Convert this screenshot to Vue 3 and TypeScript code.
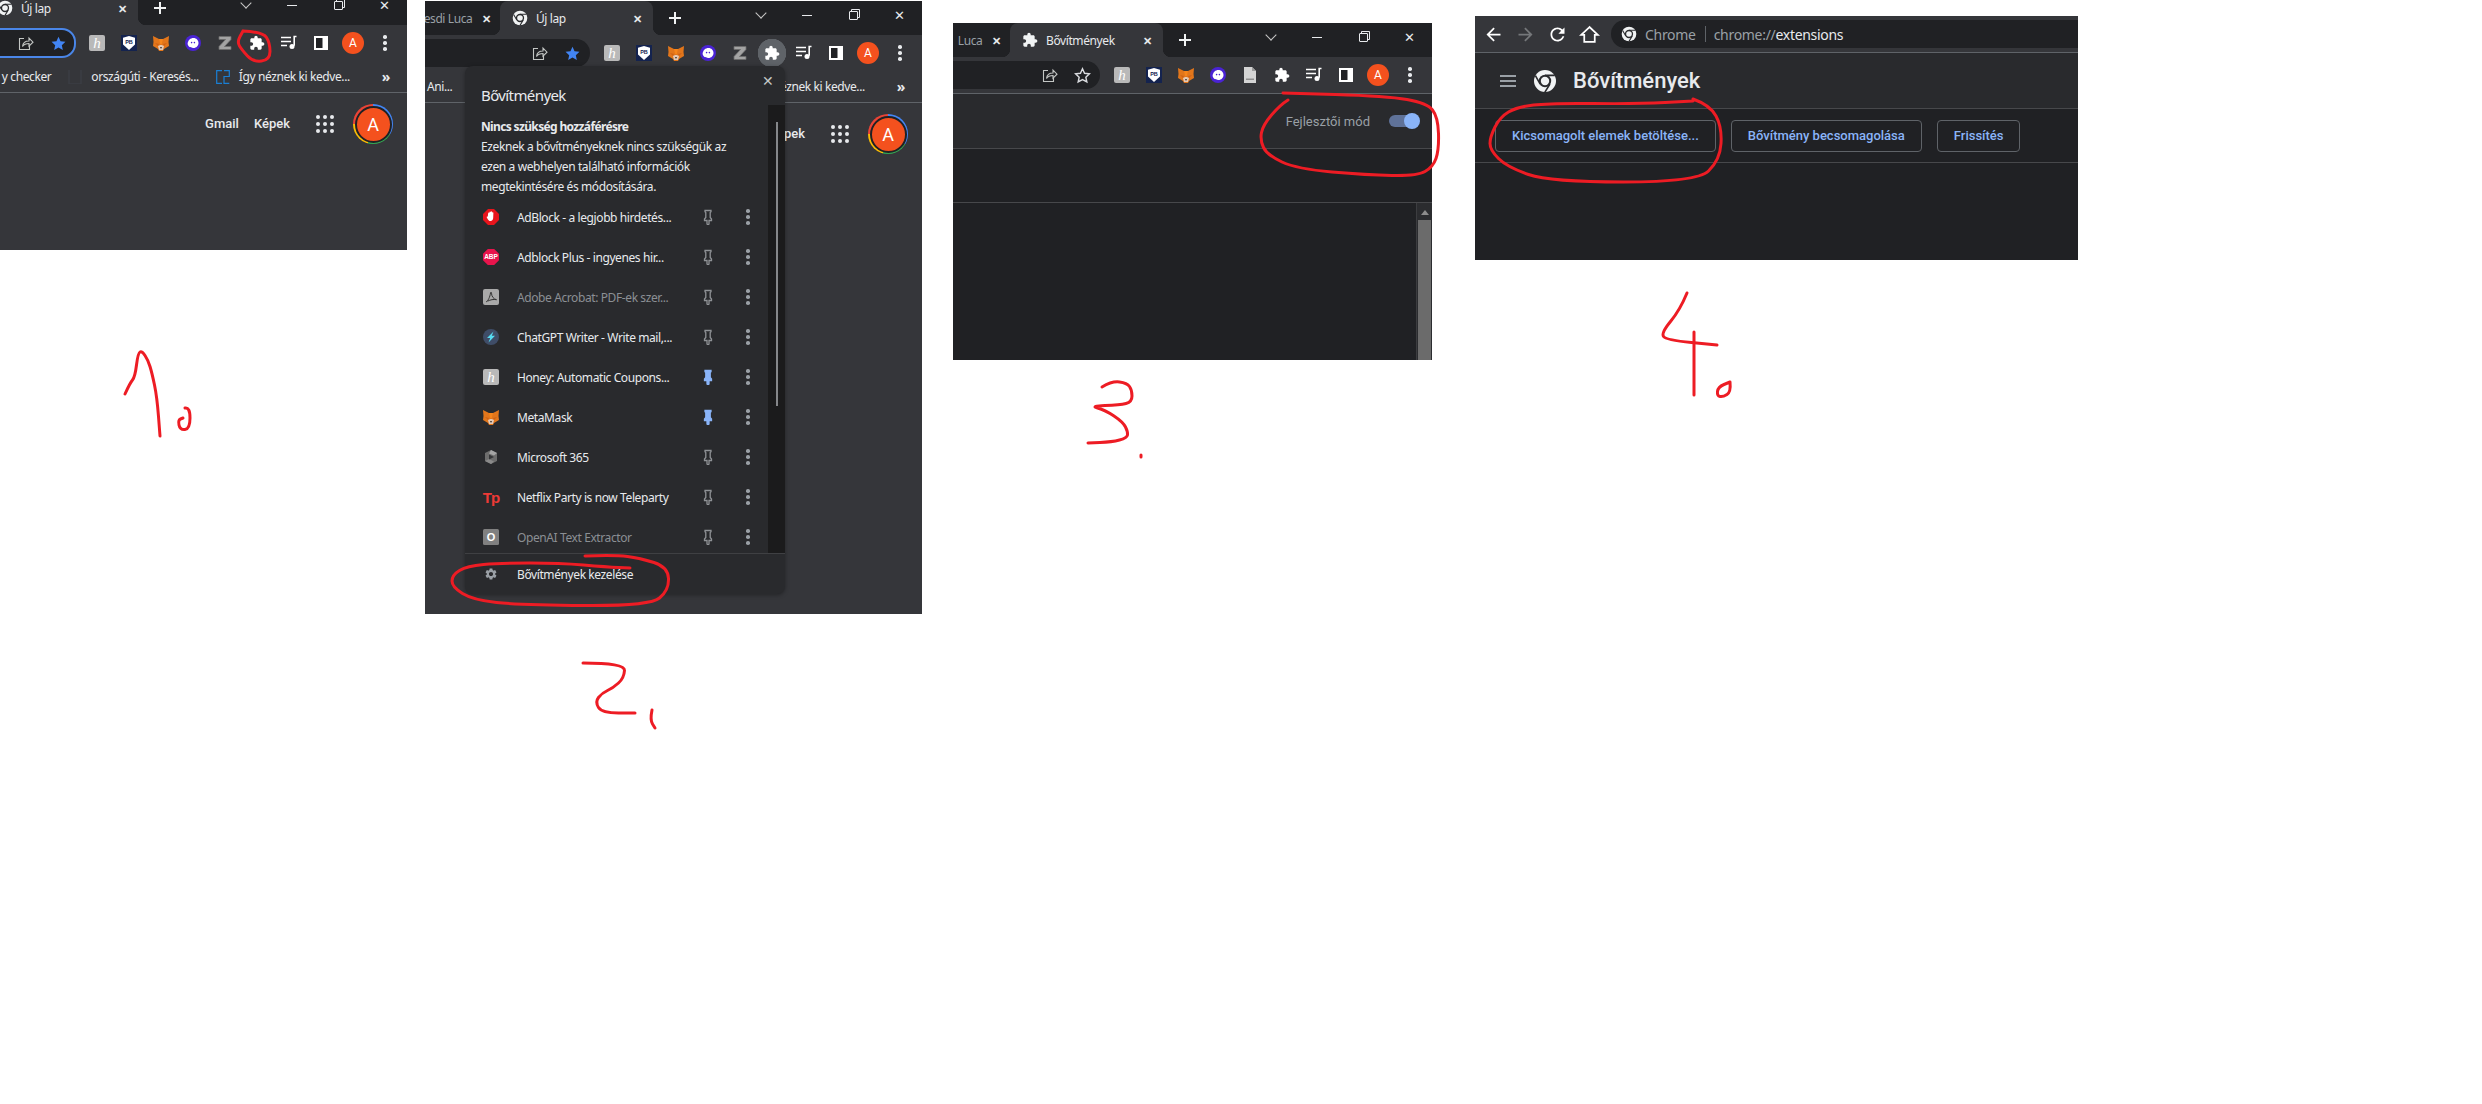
<template>
  <div class="canvas">
    <!-- shared icons -->
    <svg class="sprite" width="0" height="0">
      <symbol id="chrome" viewBox="0 0 24 24">
        <circle cx="12" cy="12" r="11" fill="#f1f3f4" />
        <circle cx="12" cy="12" r="6.2" fill="#2a2b2e" />
        <circle cx="12" cy="12" r="4.2" fill="#f1f3f4" />
        <path d="M12 6.4h9.8M7.2 15.1 2.4 6.7M16.9 15 11.8 23.4" stroke="#2a2b2e" stroke-width="1.6" fill="none" />
      </symbol>
      <symbol id="puzzle" viewBox="0 0 24 24">
        <path fill="currentColor" d="M20.5 11H19V7c0-1.1-.9-2-2-2h-4V3.5C13 2.12 11.88 1 10.5 1S8 2.12 8 3.5V5H4c-1.1 0-1.99.9-1.99 2v3.8H3.5c1.49 0 2.7 1.21 2.7 2.7s-1.21 2.7-2.7 2.7H2V20c0 1.1.9 2 2 2h3.8v-1.5c0-1.49 1.21-2.7 2.7-2.7 1.49 0 2.7 1.21 2.7 2.7V22H17c1.1 0 2-.9 2-2v-4h1.5c1.38 0 2.5-1.12 2.5-2.5S21.88 11 20.5 11z" />
      </symbol>
      <symbol id="fox" viewBox="0 0 16 16">
        <polygon points="0,1 6,4 10,4 16,1 15.5,7 16,11 11,14 10,16 6,16 5,14 0,11 .5,7" fill="#e2761b" />
        <polygon points="6,4 10,4 8.8,9 7.2,9" fill="#f6851b" />
        <polygon points="2,8 6,9 5,11" fill="#cd6116" />
        <polygon points="14,8 10,9 11,11" fill="#cd6116" />
        <polygon points="5,11 7.2,10 8.8,10 11,11 10,15 6,15" fill="#e4c9b5" />
        <polygon points="7,12 9,12 8,14" fill="#333" />
      </symbol>
      <symbol id="ghost" viewBox="0 0 16 16">
        <circle cx="8" cy="8" r="8" fill="#4a23d4" />
        <path d="M2.6 9C3 5 5.5 3 8.5 3c2.8 0 5 2.2 5 5 0 2.8-2.200 5-5 5-1 0-2-.3-2.800-.9C4.600 12.400 3 11 2.600 9z" fill="#fff" />
        <circle cx="6.600" cy="7.600" r=".8" fill="#4a23d4" />
        <circle cx="9.400" cy="7.600" r=".8" fill="#4a23d4" />
      </symbol>
      <symbol id="zed" viewBox="0 0 16 16">
        <path d="M2 1.500h12v3L7.500 11.500H14v3H2v-3L8.500 4.500H2z" fill="#a3a3a3" stroke="#6c6c6c" stroke-width=".8" />
      </symbol>
      <symbol id="doc" viewBox="0 0 16 16">
        <path d="M2 0h8l4 4v12H2z" fill="#d4d4d4" />
        <path d="M10 0l4 4h-4z" fill="#9b9b9b" />
        <rect x="4" y="11.500" width="8" height="1.500" fill="#8f8f8f" />
      </symbol>
      <symbol id="music" viewBox="0 0 16 16">
        <path d="M0 2.500h10M0 6.500h10M0 10.500h6" stroke="currentColor" stroke-width="1.600" fill="none" />
        <path d="M15.500 1.500h-2.300v9.200" stroke="currentColor" stroke-width="1.600" fill="none" />
        <circle cx="11" cy="11.500" r="2.500" fill="currentColor" />
      </symbol>
      <symbol id="side" viewBox="0 0 16 16">
        <rect x="1" y="1" width="14" height="14" fill="currentColor" />
        <rect x="3" y="3" width="6.500" height="10" fill="#202124" />
      </symbol>
      <symbol id="share" viewBox="0 0 16 16">
        <path d="M6 3.500H1.500v11h10V11" stroke="currentColor" stroke-width="1.100" fill="none" />
        <path d="M4.500 11.500C5 7.500 8 6 11 6V3l4 4.200-4 4V8.500c-2.500 0-5 .8-6.500 3z" stroke="currentColor" stroke-width="1.100" fill="none" />
      </symbol>
      <symbol id="star" viewBox="0 0 24 24">
        <path d="M12 2.500l2.900 6.300 6.900.8-5.100 4.700 1.400 6.800-6.100-3.400-6.100 3.400 1.400-6.800-5.100-4.700 6.900-.8z" />
      </symbol>
      <symbol id="gear" viewBox="0 0 24 24">
        <path fill="currentColor" d="M19.140 12.940c.04-.3.06-.61.06-.94 0-.32-.02-.64-.07-.94l2.030-1.580c.18-.14.23-.41.12-.61l-1.920-3.320c-.12-.22-.37-.29-.59-.22l-2.390.96c-.5-.38-1.030-.7-1.620-.94l-.36-2.540c-.04-.24-.24-.41-.48-.41h-3.840c-.24 0-.43.17-.47.41l-.36 2.540c-.59.24-1.130.57-1.620.94l-2.390-.96c-.22-.08-.47 0-.59.22L2.740 8.870c-.12.21-.08.47.12.61l2.030 1.580c-.05.3-.09.63-.09.94s.02.64.07.94l-2.030 1.580c-.18.14-.23.41-.12.61l1.920 3.320c.12.22.37.29.59.22l2.390-.96c.5.38 1.030.7 1.620.94l.36 2.540c.05.24.24.41.48.41h3.840c.24 0 .44-.17.47-.41l.36-2.540c.59-.24 1.130-.56 1.620-.94l2.390.96c.22.08.47 0 .59-.22l1.920-3.320c.12-.22.07-.47-.12-.61l-2.010-1.580zM12 15.600c-1.980 0-3.600-1.620-3.600-3.600s1.620-3.600 3.600-3.600 3.600 1.620 3.600 3.600-1.620 3.600-3.600 3.600z" />
      </symbol>
      <symbol id="pin" viewBox="0 0 16 16">
        <path d="M5 1.500h6v1.200l-.8.8v5l1.300 1.500v1.500H9v3.500l-1 1-1-1V11.500H4.500V10l1.300-1.500v-5L5 2.700z" stroke="currentColor" stroke-width="1.300" />
      </symbol>
      <symbol id="adblock" viewBox="0 0 16 16">
        <path d="M5 0h6l5 5v6l-5 5H5l-5-5V5z" fill="#e8141c" />
        <path d="M4.800 7.500 5.200 4c.1-.7 1-.7 1.100 0L6.500 3c.1-.7 1.100-.7 1.200 0l.2-.2c.1-.7 1.100-.7 1.200 0l.2.900c.1-.6 1.100-.6 1.100.1l-.2 5c0 2-1 3.200-2.700 3.200-1.600 0-2.200-1-3.700-3.600-.3-.7.4-1.100.9-.7z" fill="#fff" />
      </symbol>
      <symbol id="acrobat" viewBox="0 0 16 16">
        <rect width="16" height="16" rx="2" fill="#a9a9a9" />
        <path d="M3 13c2-1 4-5 4.500-9 .2-1.200 1-1 1 .2 0 3 2 6 5 6.500-3-.6-6 0-9 1.500" stroke="#333" stroke-width="1" fill="none" />
      </symbol>
      <symbol id="bolt" viewBox="0 0 16 16">
        <circle cx="8" cy="8" r="8" fill="#3f4d68" />
        <path d="M10.500 2.500 4 9h3.200L5.500 13.500 12 6.800H8.800z" fill="#57dcf2" />
      </symbol>
      <symbol id="office" viewBox="0 0 16 16">
        <path d="M8 1l6 3v8l-6 3-6-3V4z" fill="#6d6d6d" />
        <path d="M8 1l6 3-3 2.500L6 4.500z" fill="#a5a5a5" />
        <path d="M2 12l4-2 5 2.500L8 15z" fill="#8a8a8a" />
        <path d="M6 5.500 11 8l-5 2.500z" fill="#353638" />
      </symbol>
    </svg>

    <section v-for="win in browsers" :key="win.id" class="window" :class="win.id">
      <div class="tabstrip">
        <div class="prev-tab">
          <template v-if="win.prevTab">
            <span class="prev-title">{{ win.prevTab }}</span>
            <span class="x small">✕</span>
          </template>
        </div>
        <div class="tab">
          <svg class="tab-ico"><use :href="'#' + win.tabIcon" /></svg>
          <span class="tab-title">{{ win.title }}</span>
          <span class="x small tab-x">✕</span>
        </div>
        <span class="plus"></span>
        <div class="controls">
          <span class="ctl"><i class="chev"></i></span>
          <span class="ctl"><i class="min"></i></span>
          <span class="ctl"><i class="res"></i></span>
          <span class="ctl close-ctl">✕</span>
        </div>
      </div>

      <div class="toolbar">
        <div class="omni" :class="{ focus: win.focus }">
          <span class="slot"><svg class="i16 light"><use href="#share" /></svg></span>
          <span class="slot">
            <svg class="i16" :class="win.starred ? 'star-on' : 'star-off'"><use href="#star" /></svg>
          </span>
        </div>
        <span
          v-for="name in win.icons"
          :key="name"
          class="slot"
          :class="{ hovered: win.hover && name === 'puzzle' }"
        >
          <span v-if="name === 'avatar'" class="avatar-sm">A</span>
          <span v-else-if="name === 'menu'" class="menu-dots"><i></i><i></i><i></i></span>
          <span v-else-if="textLogos[name]" class="logo" :class="name">{{ textLogos[name] }}</span>
          <svg v-else class="i16 white"><use :href="'#' + name" /></svg>
        </span>
      </div>

      <div v-if="win.bookmarks" class="bookmarks">
        <template v-if="win.id === 'w2'">
          <span class="bm ani">Ani...</span>
        </template>
        <template v-else>
          <span class="bm">y checker</span>
          <span class="bm">
            <svg class="bm-ico" viewBox="0 0 14 14"><path d="M1 0v14h12V0" stroke="#3b3e44" stroke-width="1.500" fill="none" /></svg>
            országúti - Keresés...
          </span>
        </template>
        <span class="bm">
          <svg class="bm-ico" viewBox="0 0 14 14"><path d="M6 .7H.7v12.600H6M8 .7h5.300v5.800H8v6.800h5.300" stroke="#1a7fd4" stroke-width="1.200" fill="none" /></svg>
          Így néznek ki kedve...
        </span>
        <span class="more">»</span>
      </div>

      <div v-if="win.bookmarks" class="page">
        <span v-if="win.id === 'w1'" class="glink">Gmail</span>
        <span class="glink">Képek</span>
        <span class="apps"><i v-for="n in 9" :key="n"></i></span>
        <span class="ring"><span class="avatar-lg">A</span></span>

        <!-- extensions popup -->
        <div v-if="win.id === 'w2'" class="popup">
          <span class="x popup-x">✕</span>
          <h2 class="popup-title">Bővítmények</h2>
          <div class="popup-body">
            <div class="track"><div class="thumb"></div></div>
            <div class="notice">
              <strong>Nincs szükség hozzáférésre</strong>
              <p>Ezeknek a bővítményeknek nincs szükségük az ezen a webhelyen található információk megtekintésére és módosítására.</p>
            </div>
            <div v-for="ext in extensions" :key="ext.name" class="ext" :class="{ dim: ext.dim }">
              <span v-if="textLogos[ext.icon]" class="logo" :class="ext.icon">{{ textLogos[ext.icon] }}</span>
              <svg v-else class="i16"><use :href="'#' + ext.icon" /></svg>
              <span class="ext-name">{{ ext.name }}</span>
              <svg class="i16 pin" :class="{ pinned: ext.pinned }"><use href="#pin" /></svg>
              <span class="menu-dots grey"><i></i><i></i><i></i></span>
            </div>
          </div>
          <div class="popup-foot">
            <svg class="i16 gear"><use href="#gear" /></svg>
            <span>Bővítmények kezelése</span>
          </div>
        </div>
      </div>

      <div v-if="win.id === 'w3'" class="ext-page">
        <div class="dev-row">
          <span class="dev-label">Fejlesztői mód</span>
          <span class="toggle"><i></i></span>
        </div>
        <div class="blank-row"></div>
        <div class="list-area">
          <div class="scrollbar">
            <span class="arrow"></span>
            <span class="bar"></span>
          </div>
        </div>
      </div>
    </section>

    <!-- step 4 window has a different toolbar -->
    <section class="window w4">
      <div class="nav">
        <span class="nav-slot">
          <svg viewBox="0 0 24 24" class="i20 white"><path fill="currentColor" d="M20 11H7.830l5.590-5.590L12 4l-8 8 8 8 1.410-1.410L7.830 13H20z" /></svg>
        </span>
        <span class="nav-slot">
          <svg viewBox="0 0 24 24" class="i20 off"><path fill="currentColor" d="M12 4l-1.410 1.410L16.170 11H4v2h12.170l-5.580 5.590L12 20l8-8z" /></svg>
        </span>
        <span class="nav-slot">
          <svg viewBox="0 0 24 24" class="i20 white"><path fill="currentColor" d="M17.650 6.350C16.200 4.900 14.210 4 12 4c-4.420 0-7.990 3.580-7.990 8s3.570 8 7.990 8c3.730 0 6.840-2.550 7.730-6h-2.080c-.82 2.330-3.040 4-5.650 4-3.310 0-6-2.690-6-6s2.690-6 6-6c1.660 0 3.140.69 4.220 1.780L13 11h7V4z" /></svg>
        </span>
        <span class="nav-slot">
          <svg viewBox="0 0 24 24" class="i20 white"><path fill="none" stroke="currentColor" stroke-width="2" d="M12 3.500 2.500 12.500H6v8h12v-8h3.500z" /></svg>
        </span>
        <div class="url">
          <svg class="url-ico"><use href="#chrome" /></svg>
          <span class="url-site">Chrome</span>
          <span class="url-sep"></span>
          <span class="url-dim">chrome://</span><span class="url-main">extensions</span>
        </div>
      </div>
      <div class="ext-head">
        <span class="burger"><i></i><i></i><i></i></span>
        <svg class="head-logo"><use href="#chrome" /></svg>
        <h1>Bővítmények</h1>
      </div>
      <div class="actions">
        <button v-for="label in actions" :key="label" class="action">{{ label }}</button>
      </div>
    </section>

    <!-- hand-drawn marks on top of the screenshots -->
    <svg class="marks" viewBox="0 0 2482 1104">
      <path v-for="(d, i) in scribbles" :key="i" :d="d" />
    </svg>
  </div>
</template>

<script setup lang="ts">
type Point = [number, number]

interface Browser {
  id: string
  prevTab: string
  tabIcon: string
  title: string
  focus: boolean
  starred: boolean
  hover: boolean
  bookmarks: boolean
  icons: string[]
}

const baseIcons = ['honey', 'pb', 'fox', 'ghost', 'zed', 'puzzle', 'music', 'side', 'avatar', 'menu']

// extension logos that are just letters
const textLogos: Record<string, string> = {
  honey: 'h',
  pb: 'PB',
  abp: 'ABP',
  tp: 'Tp',
  openai: 'O'
}

const browsers: Browser[] = [
  { id: 'w1', prevTab: '', tabIcon: 'chrome', title: 'Új lap', focus: true, starred: true, hover: false, bookmarks: true, icons: baseIcons },
  { id: 'w2', prevTab: 'esdi Luca', tabIcon: 'chrome', title: 'Új lap', focus: false, starred: true, hover: true, bookmarks: true, icons: baseIcons },
  {
    id: 'w3',
    prevTab: 'Luca',
    tabIcon: 'puzzle',
    title: 'Bővítmények',
    focus: false,
    starred: false,
    hover: false,
    bookmarks: false,
    icons: ['honey', 'pb', 'fox', 'ghost', 'doc', 'puzzle', 'music', 'side', 'avatar', 'menu']
  }
]

const extensions = [
  { name: 'AdBlock - a legjobb hirdetés...', icon: 'adblock', dim: false, pinned: false },
  { name: 'Adblock Plus - ingyenes hir...', icon: 'abp', dim: false, pinned: false },
  { name: 'Adobe Acrobat: PDF-ek szer...', icon: 'acrobat', dim: true, pinned: false },
  { name: 'ChatGPT Writer - Write mail,...', icon: 'bolt', dim: false, pinned: false },
  { name: 'Honey: Automatic Coupons...', icon: 'honey', dim: false, pinned: true },
  { name: 'MetaMask', icon: 'fox', dim: false, pinned: true },
  { name: 'Microsoft 365', icon: 'office', dim: false, pinned: false },
  { name: 'Netflix Party is now Teleparty', icon: 'tp', dim: false, pinned: false },
  { name: 'OpenAI Text Extractor', icon: 'openai', dim: true, pinned: false }
]

const actions = ['Kicsomagolt elemek betöltése...', 'Bővítmény becsomagolása', 'Frissítés']

// rounds a list of points into one path, like a mouse-drawn line
const smooth = (pts: Point[]) => {
  let d = `M${pts[0][0]} ${pts[0][1]}`
  for (let i = 1; i < pts.length - 1; i++) {
    const mx = (pts[i][0] + pts[i + 1][0]) / 2
    const my = (pts[i][1] + pts[i + 1][1]) / 2
    d += ` Q${pts[i][0]} ${pts[i][1]} ${mx} ${my}`
  }
  const last = pts[pts.length - 1]
  return d + ` L${last[0]} ${last[1]}`
}

const scribbles = ([
  // circle 1
  [[243, 31], [263, 32], [270, 43], [270, 60], [253, 62], [242, 50], [237, 42], [243, 31]],
  // circle 2
  [[585, 556], [615, 555], [640, 558], [668, 567], [669, 590], [650, 606], [520, 605], [473, 600], [452, 587], [452, 575], [467, 566], [500, 563], [560, 563], [607, 567], [630, 568]],
  // circle 3
  [[1288, 100], [1280, 105], [1263, 125], [1260, 140], [1267, 155], [1297, 169], [1367, 175], [1417, 176], [1433, 167], [1439, 150], [1438, 117], [1427, 103], [1387, 96], [1283, 93]],
  // circle 4
  [[1693, 99], [1710, 105], [1722, 127], [1720, 160], [1697, 182], [1550, 182], [1507, 167], [1490, 150], [1490, 137], [1500, 117], [1517, 107], [1550, 103], [1637, 104], [1693, 101]],
  // number 1
  [[125, 394], [130, 383], [135, 377], [138, 353], [142, 351], [148, 360], [152, 373], [157, 397], [160, 436]],
  [[185, 408], [190, 407], [190, 429], [180, 430], [178, 420], [183, 418]],
  // number 2
  [[583, 663], [625, 663], [624, 678], [613, 688], [602, 693], [595, 702], [602, 713], [635, 713]],
  [[652, 710], [650, 720], [655, 728]],
  // number 3
  [[1102, 387], [1112, 381], [1127, 383], [1132, 390], [1132, 402], [1120, 405], [1090, 406], [1105, 410], [1123, 422], [1128, 432], [1127, 438], [1112, 442], [1088, 443]],
  [[1141, 455], [1141, 456], [1141, 457]],
  // number 4
  [[1687, 293], [1680, 310], [1661, 333], [1666, 340], [1717, 345]],
  [[1694, 332], [1694, 364], [1694, 395]],
  [[1730, 382], [1731, 392], [1723, 397], [1717, 396], [1718, 387], [1730, 382]]
] as Point[][]).map(smooth)
</script>

<style scoped>
.canvas {
  position: relative;
  width: 2482px;
  height: 1104px;
  overflow: hidden;
  background: #fff;
  font-family: "Noto Sans", sans-serif;
  font-size: 12px;
  letter-spacing: -0.4px;
  color: #e8eaed;
}

.sprite {
  position: absolute;
}

.window {
  position: absolute;
  display: flex;
  flex-direction: column;
  overflow: hidden;
  background: #35363a;
}

.w1 {
  left: 0;
  top: -9px;
  width: 407px;
  height: 259px;
}

.w2 {
  left: 425px;
  top: 1px;
  width: 497px;
  height: 613px;
}

.w3 {
  left: 953px;
  top: 23px;
  width: 479px;
  height: 337px;
}

.w4 {
  left: 1475px;
  top: 16px;
  width: 603px;
  height: 244px;
  background: #202124;
}

.tabstrip {
  display: flex;
  align-items: center;
  height: 34px;
  flex-shrink: 0;
  background: #202124;
}

.prev-tab {
  display: flex;
  align-items: center;
  justify-content: flex-end;
  flex-shrink: 0;
  height: 100%;
  padding-right: 9px;
  color: #9aa0a6;
  white-space: nowrap;
}

.w1 .prev-tab {
  width: 0;
  padding: 0;
  margin-left: -15px;
}

.w2 .prev-tab {
  width: 66px;
}

.w3 .prev-tab {
  width: 48px;
}

.prev-title {
  margin-right: 10px;
}

.x {
  color: #e8eaed;
  line-height: 1;
}

.small {
  font-size: 11px;
  font-weight: 700;
}

.tab {
  position: relative;
  display: flex;
  align-items: center;
  flex-shrink: 0;
  width: 153px;
  height: 100%;
  padding-left: 12px;
  box-sizing: border-box;
  background: #35363a;
  border-radius: 8px 8px 0 0;
}

.tab::before,
.tab::after {
  content: "";
  position: absolute;
  bottom: 0;
  width: 8px;
  height: 8px;
}

.tab::before {
  left: -8px;
  background: radial-gradient(circle at 0 0, transparent 8px, #35363a 8.5px);
}

.tab::after {
  right: -8px;
  background: radial-gradient(circle at 100% 0, transparent 8px, #35363a 8.5px);
}

.tab-ico {
  width: 16px;
  height: 16px;
  color: #f1f3f4;
}

.tab-title {
  margin-left: 8px;
}

.tab-x {
  margin-left: auto;
  margin-right: 11px;
}

.plus {
  width: 12px;
  height: 12px;
  margin-left: 16px;
  background:
    linear-gradient(#f1f3f4, #f1f3f4) center / 12px 2px no-repeat,
    linear-gradient(#f1f3f4, #f1f3f4) center / 2px 12px no-repeat;
}

.controls {
  display: flex;
  margin-left: auto;
  align-self: flex-start;
}

.ctl {
  display: flex;
  align-items: center;
  justify-content: center;
  width: 46px;
  height: 28px;
}

.close-ctl {
  font-size: 13px;
  color: #e8eaed;
}

.chev {
  width: 7px;
  height: 7px;
  margin-top: -4px;
  border-right: 1px solid #c8c8c8;
  border-bottom: 1px solid #c8c8c8;
  transform: rotate(45deg);
}

.min {
  width: 10px;
  height: 1px;
  background: #e8eaed;
}

.res {
  width: 7px;
  height: 7px;
  border: 1px solid #e8eaed;
  border-radius: 1px;
  box-shadow: 2px -2px 0 -1px #202124, 2px -2px 0 0 #e8eaed;
}

.toolbar {
  display: flex;
  align-items: center;
  flex-shrink: 0;
  height: 36px;
  padding-right: 6px;
  box-sizing: border-box;
}

.omni {
  display: flex;
  align-items: center;
  justify-content: flex-end;
  flex: 1;
  height: 28px;
  margin: 0 6px 0 -20px;
  padding-right: 2px;
  border-radius: 14px;
  background: #202124;
}

.omni.focus {
  height: 30px;
  margin-right: 5px;
  border: 2px solid #4a86e8;
  box-sizing: border-box;
  padding-right: 0;
}

.slot {
  display: flex;
  align-items: center;
  justify-content: center;
  flex-shrink: 0;
  width: 32px;
  height: 28px;
}

.hovered {
  background: radial-gradient(circle, #5f6368 14px, transparent 14.5px);
}

.i16 {
  display: block;
  width: 16px;
  height: 16px;
}

.i20 {
  display: block;
  width: 21px;
  height: 21px;
}

.white {
  color: #fff;
}

.light {
  color: #c4c7c5;
}

.off {
  color: #75777a;
}

.star-on {
  fill: #4285f4;
  width: 17px;
  height: 17px;
}

.star-off {
  fill: none;
  stroke: #dadce0;
  stroke-width: 2;
  width: 17px;
  height: 17px;
}

/* letter logos */
.logo {
  position: relative;
  z-index: 0;
  display: flex;
  align-items: center;
  justify-content: center;
  flex-shrink: 0;
  width: 16px;
  height: 16px;
  color: #fff;
  font-family: "Liberation Sans", sans-serif;
  font-weight: 700;
  letter-spacing: 0;
  line-height: 1;
}

.logo.honey {
  border-radius: 2px;
  background: #b9b9b9;
  font-family: "Liberation Serif", serif;
  font-size: 15px;
  font-style: italic;
  font-weight: 400;
}

.logo.pb {
  background: #14234f;
  color: #14234f;
  font-size: 5.5px;
}

.logo.pb::before {
  content: "";
  position: absolute;
  inset: 1px 2px;
  z-index: -1;
  background: #fff;
  clip-path: polygon(50% 0, 100% 12%, 100% 60%, 50% 100%, 0 60%, 0 12%);
}

.logo.abp {
  background: #e8144c;
  font-size: 6.5px;
  clip-path: polygon(30% 0, 70% 0, 100% 30%, 100% 70%, 70% 100%, 30% 100%, 0 70%, 0 30%);
}

.logo.tp {
  color: #ee3a36;
  font-size: 15px;
  letter-spacing: -1px;
}

.logo.openai {
  border-radius: 1.5px;
  background: #808080;
  font-size: 11px;
}

.avatar-sm {
  display: flex;
  align-items: center;
  justify-content: center;
  width: 22px;
  height: 22px;
  border-radius: 50%;
  background: #f4511e;
  color: #fff;
  font-family: Roboto, sans-serif;
  font-size: 12px;
  letter-spacing: 0;
}

.menu-dots {
  display: flex;
  flex-direction: column;
  align-items: center;
  gap: 2.5px;
}

.menu-dots i {
  width: 3.5px;
  height: 3.5px;
  border-radius: 50%;
  background: #e8eaed;
}

.menu-dots.grey i {
  background: #9aa0a6;
}

.bookmarks {
  display: flex;
  align-items: center;
  justify-content: flex-end;
  flex-shrink: 0;
  gap: 17px;
  height: 32px;
  padding-right: 17px;
  box-sizing: border-box;
  white-space: nowrap;
  border-bottom: 1px solid #5f6368;
}

.bm {
  display: flex;
  align-items: center;
  flex-shrink: 0;
  gap: 9px;
}

.ani {
  margin: 0 auto 0 2px;
}

.bm-ico {
  width: 14px;
  height: 14px;
}

.more {
  margin-left: 15px;
  font-size: 14px;
  font-weight: 700;
}

.page {
  position: relative;
  display: flex;
  align-items: flex-start;
  justify-content: flex-end;
  flex: 1;
  gap: 15px;
  padding: 11px 14px 0 0;
}

.glink {
  line-height: 40px;
  font-family: Roboto, sans-serif;
  font-size: 13px;
  font-weight: 500;
  letter-spacing: 0;
  color: #e8eaed;
}

.apps {
  display: grid;
  grid-template-columns: repeat(3, 4px);
  gap: 3px;
  align-content: center;
  justify-content: center;
  width: 40px;
  height: 40px;
  margin-right: -7px;
}

.apps i {
  width: 4px;
  height: 4px;
  border-radius: 50%;
  background: #e8eaed;
}

.ring {
  display: flex;
  align-items: center;
  justify-content: center;
  width: 40px;
  height: 40px;
  border-radius: 50%;
  background: conic-gradient(#4285f4 0 120deg, #34a853 120deg 195deg, #fbbc04 195deg 270deg, #ea4335 270deg 360deg);
}

.avatar-lg {
  display: flex;
  align-items: center;
  justify-content: center;
  width: 33px;
  height: 33px;
  border: 2px solid #202124;
  border-radius: 50%;
  background: #f4511e;
  color: #fff;
  font-family: Roboto, sans-serif;
  font-size: 18px;
  letter-spacing: 0;
}

.popup {
  position: absolute;
  left: 40px;
  top: -37px;
  display: flex;
  flex-direction: column;
  width: 320px;
  height: 528px;
  border-radius: 8px;
  overflow: hidden;
  background: #292a2d;
  box-shadow: 0 1px 4px rgba(0, 0, 0, 0.35);
}

.popup-x {
  position: absolute;
  right: 11px;
  top: 8px;
  font-size: 14px;
  color: #c4c7c5;
}

.popup-title {
  margin: 0;
  padding: 19px 0 0 16px;
  height: 20px;
  font-size: 15px;
  font-weight: 400;
  line-height: 20px;
  letter-spacing: -0.6px;
}

.popup-body {
  position: relative;
  flex: 1;
  min-height: 0;
  overflow: hidden;
  padding-top: 12px;
}

.track {
  position: absolute;
  right: 0;
  top: 0;
  bottom: 0;
  width: 17px;
  background: #1b1b1c;
}

.thumb {
  width: 2px;
  height: 284px;
  margin: 17px 0 0 8px;
  background: #85878a;
}

.notice {
  width: 270px;
  padding-left: 16px;
  line-height: 20px;
}

.notice strong {
  font-weight: 700;
  letter-spacing: -0.65px;
}

.notice p {
  margin: 0;
}

.ext {
  display: flex;
  align-items: center;
  width: 303px;
  height: 40px;
  padding-left: 18px;
  box-sizing: border-box;
}

.ext-name {
  flex: 1;
  margin-left: 18px;
  white-space: nowrap;
}

.ext.dim .ext-name {
  color: #8b8f94;
}

.pin {
  fill: none;
  color: #8f9296;
  margin-right: 24px;
}

.pin.pinned {
  fill: #8ab4f8;
  color: #8ab4f8;
}

.ext .menu-dots {
  width: 16px;
  margin-right: 12px;
}

.popup-foot {
  display: flex;
  align-items: center;
  gap: 18px;
  flex-shrink: 0;
  height: 40px;
  padding-left: 18px;
  border-top: 1px solid #3f4043;
}

.gear {
  width: 14px;
  height: 14px;
  margin: 0 1px;
  color: #9aa0a6;
}

.ext-page {
  display: flex;
  flex-direction: column;
  flex: 1;
  min-height: 0;
  border-top: 1px solid #5f6368;
  background: #202124;
  font-family: Roboto, sans-serif;
  letter-spacing: 0;
}

.dev-row {
  display: flex;
  align-items: center;
  justify-content: flex-end;
  flex-shrink: 0;
  gap: 19px;
  height: 55px;
  padding-right: 13px;
  box-sizing: border-box;
  background: #292a2d;
  border-bottom: 1px solid #47484b;
}

.dev-label {
  font-size: 13px;
  color: #9aa0a6;
}

.toggle {
  position: relative;
  width: 30px;
  height: 12px;
  border-radius: 6px;
  background: #5f7299;
}

/* knob hangs over the ends of the track */
.toggle i {
  position: absolute;
  right: -1px;
  top: -2px;
  width: 16px;
  height: 16px;
  border-radius: 50%;
  background: #8ab4f8;
}

.blank-row {
  flex-shrink: 0;
  height: 54px;
  box-sizing: border-box;
  border-bottom: 1px solid #47484b;
}

.list-area {
  display: flex;
  justify-content: flex-end;
  flex: 1;
  min-height: 0;
}

.scrollbar {
  display: flex;
  flex-direction: column;
  align-items: center;
  width: 16px;
  border-left: 1px solid #3c3d40;
  box-sizing: border-box;
  background: #2b2c2f;
}

.arrow {
  width: 0;
  height: 0;
  margin: 7px 0 5px;
  border-left: 4px solid transparent;
  border-right: 4px solid transparent;
  border-bottom: 5px solid #8c8c8c;
}

.bar {
  flex: 1;
  width: 13px;
  background: #6b6b6b;
}

.nav {
  display: flex;
  align-items: center;
  flex-shrink: 0;
  height: 36px;
  padding-left: 2px;
  background: #35363a;
  border-bottom: 1px solid #5f6368;
  font-size: 14px;
  letter-spacing: -0.3px;
}

.nav-slot {
  display: flex;
  align-items: center;
  justify-content: center;
  flex-shrink: 0;
  width: 32px;
  height: 28px;
}

.url {
  display: flex;
  align-items: center;
  flex: 1;
  height: 28px;
  margin-left: 6px;
  padding-left: 10px;
  border-radius: 14px 0 0 14px;
  background: #202124;
}

.url-ico {
  width: 16px;
  height: 16px;
}

.url-site {
  margin-left: 8px;
  color: #9aa0a6;
}

.url-sep {
  width: 1px;
  height: 16px;
  margin: 0 8px 0 9px;
  background: #5f6368;
}

.url-dim {
  color: #9aa0a6;
}

.url-main {
  color: #e8eaed;
}

.ext-head {
  display: flex;
  align-items: center;
  flex-shrink: 0;
  height: 56px;
  padding-left: 25px;
  box-sizing: border-box;
  background: #292a2d;
  border-bottom: 1px solid #47484b;
  font-family: Roboto, sans-serif;
  letter-spacing: 0;
}

.burger {
  display: flex;
  flex-direction: column;
  gap: 3px;
  width: 16px;
}

.burger i {
  height: 2px;
  background: #9aa0a6;
}

.head-logo {
  width: 24px;
  height: 24px;
  margin-left: 17px;
}

.ext-head h1 {
  margin: 0 0 0 16px;
  font-size: 22px;
  font-weight: 500;
  color: #e8eaed;
}

.actions {
  display: flex;
  align-items: center;
  flex-shrink: 0;
  gap: 15px;
  height: 54px;
  padding-left: 20px;
  box-sizing: border-box;
  border-bottom: 1px solid #47484b;
}

.action {
  height: 32px;
  padding: 0 16px;
  border: 1px solid #5f6368;
  border-radius: 4px;
  background: transparent;
  color: #8ab4f8;
  font-family: Roboto, sans-serif;
  font-size: 13px;
  font-weight: 500;
  white-space: nowrap;
}

.marks {
  position: absolute;
  left: 0;
  top: 0;
  width: 2482px;
  height: 1104px;
  fill: none;
  stroke: #ed1c24;
  stroke-width: 3;
  stroke-linecap: round;
  stroke-linejoin: round;
  pointer-events: none;
}
</style>
